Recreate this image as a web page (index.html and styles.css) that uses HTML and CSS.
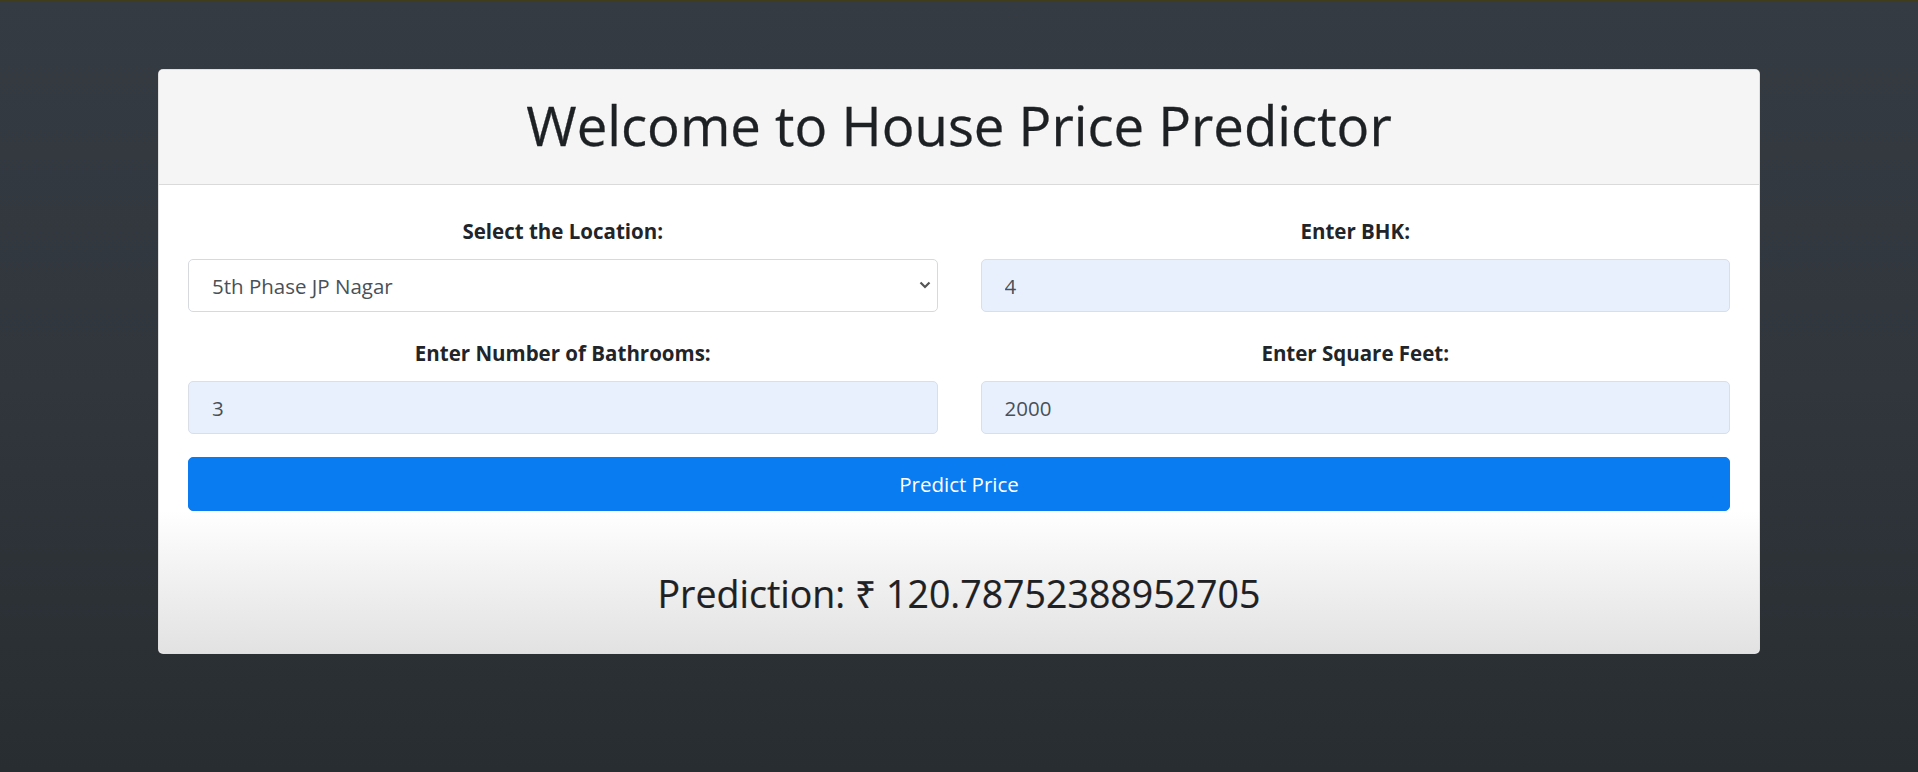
FILE: index.html
```html
<!DOCTYPE html>
<html lang="en">
<head>
<meta charset="utf-8">
<title>House Price Predictor</title>
<link rel="stylesheet" href="styles.css">
</head>
<body>
<div class="topline"></div>
<main class="page">
  <section class="card">
    <header class="card-header">
      <h1 class="title">Welcome to House Price Predictor</h1>
    </header>
    <div class="card-body">
      <form class="form-grid">
        <div class="field">
          <label class="field-label" for="location">Select the Location:</label>
          <div class="select-wrap">
            <select id="location" class="control control-select">
              <option>5th Phase JP Nagar</option>
            </select>
            <svg class="chevron" width="12" height="8" viewBox="0 0 12 8"><path d="M1.5 1.5 L6 6 L10.5 1.5" fill="none" stroke="#555" stroke-width="2.2"/></svg>
          </div>
        </div>
        <div class="field">
          <label class="field-label" for="bhk">Enter BHK:</label>
          <input id="bhk" class="control control-filled" value="4">
        </div>
        <div class="field">
          <label class="field-label" for="bath">Enter Number of Bathrooms:</label>
          <input id="bath" class="control control-filled" value="3">
        </div>
        <div class="field">
          <label class="field-label" for="sqft">Enter Square Feet:</label>
          <input id="sqft" class="control control-filled" value="2000">
        </div>
        <button type="button" class="btn-predict">Predict Price</button>
      </form>
    </div>
    <div class="result">
      <h3 class="prediction">Prediction: ₹ 120.78752388952705</h3>
    </div>
  </section>
</main>
</body>
</html>
```

FILE: styles.css
```css
* { box-sizing: border-box; }

html, body {
  margin: 0;
  height: 100%;
}

body {
  background: linear-gradient(180deg, #353b42 0%, #30363c 50%, #272d30 100%);
  font-family: "Open Sans", "Noto Sans", sans-serif;
  color: #212529;
  overflow: hidden;
}

.topline {
  height: 2px;
  background: #3f3d1c;
}

.page {
  padding-top: 67px;
  display: flex;
  justify-content: center;
}

.card {
  width: 1602px;
  background: #fff;
  border: 1px solid rgba(0, 0, 0, 0.125);
  border-radius: 5px;
  overflow: hidden;
  display: flex;
  flex-direction: column;
}

.card-header {
  background: #f5f5f5;
  border-bottom: 1px solid #dadada;
  height: 115px;
  display: flex;
  align-items: center;
  justify-content: center;
}

.title {
  margin: 0 0 2px;
  font-size: 54.5px;
  font-weight: 400;
  line-height: 1.2;
  color: #1e2124;
  -webkit-text-stroke: 0.3px #1e2124;
}

.card-body {
  padding: 31px 29px 0;
}

.form-grid {
  display: grid;
  grid-template-columns: 1fr 1fr;
  column-gap: 43px;
  row-gap: 26px;
  margin: 0;
}

.field {
  display: flex;
  flex-direction: column;
}

.field-label {
  display: block;
  text-align: center;
  font-weight: 700;
  font-size: 20.5px;
  line-height: 30px;
  margin-bottom: 13px;
  color: #212529;
}

.select-wrap {
  position: relative;
}

.control {
  display: block;
  width: 100%;
  height: 53px;
  padding: 0 23px;
  font-family: inherit;
  font-size: 20.5px;
  color: #495057;
  border: 1px solid #d6dade;
  border-radius: 5px;
  outline: none;
}

.control-select {
  appearance: none;
  -webkit-appearance: none;
  background: #fff;
}

.control-filled {
  background: #e8f0fe;
  border-color: #dadfe7;
}

.chevron {
  position: absolute;
  right: 7px;
  top: 22px;
  pointer-events: none;
}

.btn-predict {
  grid-column: 1 / -1;
  margin-top: -3px;
  height: 54px;
  border: 1px solid #0a7bf0;
  border-radius: 5px;
  background: #0a7cf1;
  color: #fff;
  font-family: inherit;
  font-size: 20.5px;
}

.result {
  flex: 1;
  background: linear-gradient(180deg, #ffffff 0%, #f3f3f3 40%, #e2e2e2 100%);
  padding: 62px 0 38px;
  text-align: center;
}

.prediction {
  margin: 0;
  font-size: 37.5px;
  font-weight: 400;
  line-height: 42px;
  color: #1e2124;
  -webkit-text-stroke: 0.2px #1e2124;
}
```
